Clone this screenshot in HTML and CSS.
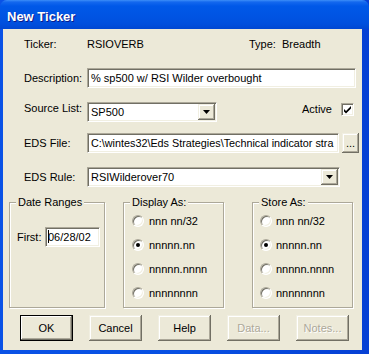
FILE: index.html
```html
<!DOCTYPE html>
<html>
<head>
<meta charset="utf-8">
<link rel="stylesheet" href="styles.css">
</head>
<body>
<div class="window">
  <div class="titlebar"><span class="title">New Ticker</span></div>
  <div class="client">
    <div class="row ticker-row">
      <span class="lbl">Ticker:</span>
      <span class="ticker-val">RSIOVERB</span>
      <span class="type-lbl">Type:</span>
      <span>Breadth</span>
    </div>
    <div class="row desc-row">
      <span class="lbl">Description:</span>
      <div class="field desc-field">% sp500 w/ RSI Wilder overbought</div>
    </div>
    <div class="row src-row">
      <span class="lbl">Source List:</span>
      <div class="combo src-combo">
        <span class="combo-text">SP500</span>
        <span class="dd-btn"><svg width="7" height="4" viewBox="0 0 7 4"><polygon points="0,0 7,0 3.5,4" fill="#000"/></svg></span>
      </div>
      <span class="active-lbl">Active</span>
      <span class="checkbox"><svg width="11" height="11" viewBox="0 0 11 11"><path d="M2 5 L4 7 L9 2 L9 4.5 L4 9.5 L2 7.5 Z" fill="#000"/></svg></span>
    </div>
    <div class="row file-row">
      <span class="lbl">EDS File:</span>
      <div class="field file-field"><span class="file-text">C:\wintes32\Eds Strategies\Technical indicator stra</span></div>
      <span class="btn browse">...</span>
    </div>
    <div class="row rule-row">
      <span class="lbl">EDS Rule:</span>
      <div class="combo rule-combo">
        <span class="combo-text">RSIWilderover70</span>
        <span class="dd-btn"><svg width="7" height="4" viewBox="0 0 7 4"><polygon points="0,0 7,0 3.5,4" fill="#000"/></svg></span>
      </div>
    </div>
    <div class="groups">
      <div class="group date-group">
        <span class="legend">Date Ranges</span>
        <div class="first-row">
          <span class="first-lbl">First:</span>
          <div class="field date-field"><span class="caret"></span>06/28/02</div>
        </div>
      </div>
      <div class="group display-group">
        <span class="legend">Display As:</span>
        <div class="radios">
          <div class="radio-row"><span class="radio"></span>nnn nn/32</div>
          <div class="radio-row"><span class="radio checked"></span>nnnnn.nn</div>
          <div class="radio-row"><span class="radio"></span>nnnnn.nnnn</div>
          <div class="radio-row"><span class="radio"></span>nnnnnnnn</div>
        </div>
      </div>
      <div class="group store-group">
        <span class="legend">Store As:</span>
        <div class="radios">
          <div class="radio-row"><span class="radio"></span>nnn nn/32</div>
          <div class="radio-row"><span class="radio checked"></span>nnnnn.nn</div>
          <div class="radio-row"><span class="radio"></span>nnnnn.nnnn</div>
          <div class="radio-row"><span class="radio"></span>nnnnnnnn</div>
        </div>
      </div>
    </div>
    <div class="buttons">
      <span class="btn push default">OK</span>
      <span class="btn push">Cancel</span>
      <span class="btn push">Help</span>
      <span class="btn push disabled">Data...</span>
      <span class="btn push disabled">Notes...</span>
    </div>
  </div>
</div>
</body>
</html>
```

FILE: styles.css
```css
* { box-sizing: border-box; }
html, body { margin: 0; padding: 0; }
body {
  width: 369px;
  height: 354px;
  overflow: hidden;
  background: #0a4fe0;
  font-family: "Liberation Sans", Arial, sans-serif;
  font-size: 11px;
  color: #000;
}
.window {
  width: 369px;
  height: 354px;
  display: flex;
  flex-direction: column;
  background: linear-gradient(90deg, #0a52e6 0, #0750e3 50%, #0640d4 100%);
}
.titlebar {
  height: 29px;
  flex: none;
  padding: 3px 0 0 7px;
  display: flex;
  align-items: center;
  border-radius: 7px 7px 0 0;
  background: linear-gradient(#3d8ef8 0, #1468ee 2px, #0058e8 6px, #0054e3 16px, #004fdd 24px, #0047d2 29px);
}
.title {
  color: #fff;
  font-weight: bold;
  font-size: 13px;
  text-shadow: 1px 1px #0a1c8a;
}
.client {
  flex: 1;
  margin: 0 7px 4px 3px;
  background: #ece9d8;
}
.row {
  display: flex;
  align-items: center;
  padding-left: 21px;
}
.lbl { width: 63px; flex: none; }
.ticker-row { margin-top: 7px; height: 16px; }
.ticker-val { width: 162px; }
.type-lbl { width: 33px; }
.desc-row { margin-top: 16px; }
.field {
  height: 20px;
  background: #fff;
  border: 1px solid;
  border-color: #aca899 #fff #fff #aca899;
  box-shadow: inset 1px 1px #716f64, inset -1px -1px #f1efe2;
  padding: 0 3px;
  line-height: 18px;
  white-space: nowrap;
  overflow: hidden;
}
.desc-field { width: 269px; }
.src-row { margin-top: 14px; align-items: flex-start; }
.combo {
  height: 20px;
  display: flex;
  background: #fff;
  border: 1px solid;
  border-color: #aca899 #fff #fff #aca899;
  box-shadow: inset 1px 1px #716f64, inset -1px -1px #f1efe2;
  padding: 1px;
}
.combo-text { flex: 1; padding-left: 2px; line-height: 16px; white-space: nowrap; }
.dd-btn, .btn {
  background: #ece9d8;
  box-shadow: inset -1px -1px #716f64, inset 1px 1px #f1efe2, inset -2px -2px #aca899, inset 2px 2px #fff;
}
.dd-btn {
  width: 17px;
  height: 16px;
  flex: none;
  display: flex;
  align-items: center;
  justify-content: center;
  padding: 0 1px 0 0;
}
.dd-btn svg { display: block; }
.src-combo { width: 130px; }
.active-lbl { margin-left: 85px; width: 39px; line-height: 14px; }
.checkbox {
  width: 13px;
  height: 13px;
  margin-top: 1px;
  background: #fff;
  border: 1px solid;
  border-color: #aca899 #fff #fff #aca899;
  box-shadow: inset 1px 1px #716f64, inset -1px -1px #f1efe2;
  display: flex;
  align-items: center;
  justify-content: center;
}
.checkbox svg { display: block; }
.file-row { margin-top: 11px; }
.file-field { width: 252px; }
.file-text { font-size: 10.8px; }
.browse {
  margin-left: 3px;
  width: 17px;
  height: 20px;
  display: flex;
  align-items: flex-end;
  justify-content: center;
  line-height: 14px;
  padding-bottom: 3px;
}
.rule-row { margin-top: 14px; }
.rule-combo { width: 253px; }
.groups {
  display: flex;
  align-items: flex-start;
  margin-top: 15px;
}
.group {
  height: 106px;
  border: 1px solid #aca899;
  box-shadow: inset 1px 1px #fff, 1px 1px #fff;
  display: flex;
  flex-direction: column;
  align-items: flex-start;
}
.legend {
  background: #ece9d8;
  line-height: 14px;
  margin: -8px 0 0 6px;
  padding: 0 2px;
}
.date-group { margin-left: 6px; width: 96px; }
.display-group { margin-left: 18px; width: 101px; }
.store-group { margin-left: 28px; width: 101px; }
.first-row {
  display: flex;
  align-items: center;
  margin-top: 18px;
  padding-left: 7px;
}
.first-lbl { width: 28px; }
.date-field { width: 55px; padding: 0 2px; }
.caret {
  display: inline-block;
  width: 1px;
  height: 13px;
  background: #000;
  vertical-align: -2px;
  margin-right: -1px;
}
.radios { padding-left: 8px; }
.store-group .radios { padding-left: 7px; }
.radio-row {
  height: 24px;
  display: flex;
  align-items: center;
  gap: 5px;
}
.store-group .radio-row { gap: 4px; }
.radio {
  width: 12px;
  height: 12px;
  border-radius: 50%;
  background: #fff;
  border: 1px solid;
  border-color: #aca899 #fff #fff #aca899;
  box-shadow: inset 1px 1px #716f64, inset -1px -1px #f1efe2;
  display: flex;
  align-items: center;
  justify-content: center;
}
.radio.checked::after {
  content: "";
  width: 4px;
  height: 4px;
  border-radius: 50%;
  background: #000;
}
.buttons {
  display: flex;
  gap: 16px;
  margin-top: 7px;
  padding-left: 17px;
}
.push {
  width: 53px;
  height: 26px;
  display: flex;
  align-items: center;
  justify-content: center;
}
.push.default {
  border: 1px solid #000;
  box-shadow: inset -1px -1px #716f64, inset 1px 1px #fff, inset -2px -2px #aca899;
}
.push.disabled {
  color: #aca899;
  text-shadow: 1px 1px #fff;
}
```
